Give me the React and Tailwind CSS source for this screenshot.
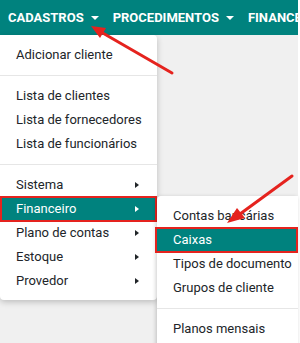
import React from 'react';

const Caret = () => (
  <span className="ml-[7px] inline-block w-0 h-0 border-x-[4px] border-x-transparent border-t-[4px] border-t-white" />
);

const SubArrow = ({ light }) => (
  <span
    className={`w-0 h-0 shrink-0 border-y-[3px] border-y-transparent border-l-[4px] ${light ? 'border-l-white' : 'border-l-[#212529]'}`}
  />
);

const Divider = () => <div className="my-2 h-px bg-[#e6e6e6]" />;

const Item = ({ label, sub, active, marked }) => (
  <div
    className={`relative h-6 flex items-center justify-between pl-4 pr-[18px] text-[13px] whitespace-nowrap ${
      active ? 'bg-[#00827e] text-white' : 'text-[#212529]'
    }`}
  >
    <span>{label}</span>
    {sub && <SubArrow light={active} />}
    {marked && <span className="absolute -top-px -bottom-px left-0 right-0 border-2 border-[#e5231e]" />}
  </div>
);

export default function App() {
  const mainItems = [
    ['Sistema', true],
    ['Financeiro', true, true],
    ['Plano de contas', true],
    ['Estoque', true],
    ['Provedor', true],
  ];

  return (
    <div className="relative w-[300px] h-[343px] overflow-hidden bg-white font-['Roboto',sans-serif]">
      <div className="w-[298px] h-full bg-[#f0f0f0]">
        {/* Top navigation */}
        <nav className="h-[35px] bg-[#00827e] flex items-center pl-2 text-[13px] font-bold text-white whitespace-nowrap overflow-hidden">
          <span className="flex items-center">CADASTROS<Caret /></span>
          <span className="flex items-center ml-[14px]">PROCEDIMENTOS<Caret /></span>
          <span className="flex items-center ml-[14px]">FINANCEIRO</span>
        </nav>
      </div>

      {/* Main dropdown */}
      <div className="absolute top-[35px] left-0 w-[157px] h-[265px] bg-white rounded-tr rounded-b shadow-[0_2px_6px_rgba(0,0,0,0.22)] py-2">
        <Item label="Adicionar cliente" />
        <Divider />
        <Item label="Lista de clientes" />
        <Item label="Lista de fornecedores" />
        <Item label="Lista de funcionários" />
        <Divider />
        {mainItems.map(([label, sub, active]) => (
          <Item key={label} label={label} sub={sub} active={active} marked={active} />
        ))}
      </div>

      {/* Financeiro submenu */}
      <div className="absolute top-[196px] left-[157px] w-[141px] h-[160px] bg-white rounded-tl shadow-[-1px_1px_4px_rgba(0,0,0,0.2)] py-2 whitespace-nowrap">
        <Item label="Contas bancárias" />
        <div className="relative h-6 flex items-center pl-4 text-[13px] bg-[#00827e] text-white">
          <span>Caixas</span>
          <span className="absolute -top-px -bottom-px -left-[2px] right-0 border-2 border-[#e5231e]" />
        </div>
        <Item label="Tipos de documento" />
        <Item label="Grupos de cliente" />
        <Divider />
        <Item label="Planos mensais" />
      </div>

      {/* Annotation arrows */}
      <svg className="absolute inset-0 pointer-events-none" width="300" height="343" viewBox="0 0 300 343">
        <line x1="172" y1="73" x2="101" y2="32" stroke="#e5231e" strokeWidth="3" strokeLinecap="round" />
        <polygon points="91,26 106,28 100,38" fill="#e5231e" />
        <line x1="292" y1="176" x2="240" y2="214" stroke="#e5231e" strokeWidth="3" strokeLinecap="round" />
        <polygon points="227,223 245,218 237,208" fill="#e5231e" />
      </svg>
    </div>
  );
}
